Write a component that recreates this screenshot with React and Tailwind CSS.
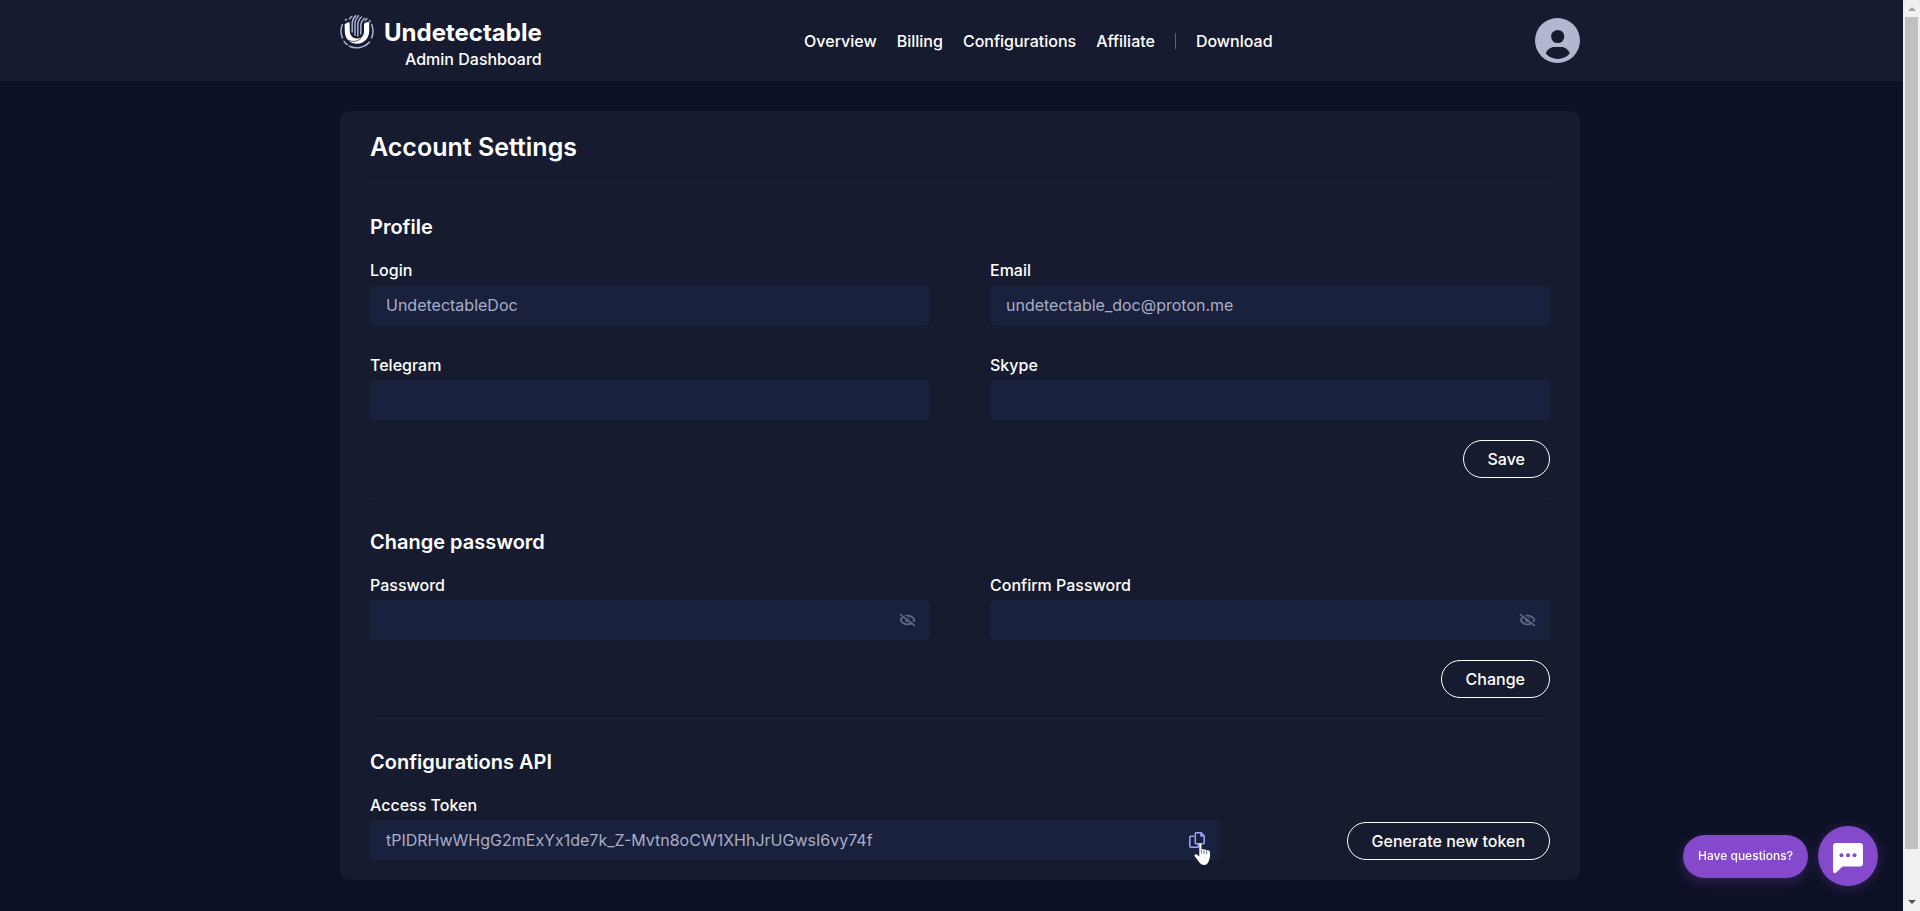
import React from "react";

function Logo() {
  return (
    <svg viewBox="0 0 34 35" className="mt-px h-[35px] w-[34px]" fill="none" strokeLinecap="round" aria-hidden="true">
      <path d="M4.600 11 C4.600 9.800 7.500 8.200 9.600 8.200 L9.800 17 C10 21.500 12.500 24.200 17 24.600 C21.500 24.600 24 21.600 24 17 L24 10 C24.600 8.600 27.500 7.600 29.200 8 L29.200 17 C29.200 24 24 29.800 17 29.800 C10.500 29.800 5.600 25.500 4.900 19 Z" fill="#fff" />
      <path d="M8.500 26.200 C12.500 28.400 18 27.600 21 24.400" stroke="#171b30" strokeWidth="0.700" />
      <g stroke="#a9b0d0" strokeWidth="1.500">
        <path d="M2.300 10.500 C0.600 15 0.600 20 2.400 24" />
        <path d="M31.700 10.500 C33.400 15 33.400 20 31.600 24" />
        <path d="M4 27.400 C5 28.800 6 29.800 7.300 30.700" />
        <path d="M9.500 32.300 C16 35.200 24.500 33.800 29.500 28" />
        <path d="M5.500 6.200 L6.300 5.300" />
        <path d="M9.600 4.900 C10 3.900 10.800 3 11.800 2.500" />
        <path d="M12.200 18 L12.200 9.500 C12.400 6.400 13.600 3.600 15.800 1.500" />
        <path d="M15 21.300 L15 10.500 C15 7 16.200 4 18.600 1.800" />
        <path d="M17.800 22 L17.800 11 C17.800 8 19 5.200 21.500 3" />
        <path d="M20.800 20 L20.800 12 C20.800 9 22 6.600 24.500 4.300" />
        <path d="M25.200 6.500 L27 4.600" />
        <path d="M29.500 6.700 L30.200 7.600" />
      </g>
    </svg>
  );
}

function Avatar() {
  return (
    <svg viewBox="0 0 45 45" className="size-[45px]" aria-hidden="true">
      <circle cx="22.500" cy="22.500" r="22.500" fill="#b0b7cf" />
      <circle cx="22.700" cy="18.500" r="6.600" fill="#171b30" />
      <path d="M10.800 35.500 C12 31.500 15.500 29 19.500 29 H26 C30 29 33.500 31.500 34.700 35.500 C31.500 39.300 27.500 40.900 22.700 40.900 C18 40.900 14 39.300 10.800 35.500 Z" fill="#171b30" />
    </svg>
  );
}

function HiddenEye() {
  return (
    <svg viewBox="0 0 17 14" className="h-[14px] w-[17px]" fill="none" aria-hidden="true">
      <path d="M1.600 7 C3 4 5.600 2.700 8.500 2.700 C11.400 2.700 14 4 15.400 7 C14 10 11.400 11.300 8.500 11.300 C5.600 11.300 3 10 1.600 7 Z" stroke="#5f6684" strokeWidth="1.800" />
      <circle cx="8.700" cy="6.800" r="2.500" fill="#5f6684" />
      <path d="M2 0 L17 12" stroke="#1a213c" strokeWidth="1.500" />
      <path d="M0.900 1.200 L15.900 12.900" stroke="#5f6684" strokeWidth="1.700" />
    </svg>
  );
}

function CopyIcon() {
  return (
    <svg viewBox="0 0 16 16" className="size-4" fill="none" stroke="#a3a6ff" strokeWidth="1.500" strokeLinejoin="round" aria-hidden="true">
      <path d="M4.800 4.300 H1.800 Q0.800 4.300 0.800 5.300 V14.200 Q0.800 15.200 1.800 15.200 H8.500 Q9.500 15.200 9.500 14.200 V12.200" />
      <path d="M7.300 0.800 H12.200 L15.200 3.800 V10.700 Q15.200 11.700 14.200 11.700 H7.300 Q6.300 11.700 6.300 10.700 V1.800 Q6.300 0.800 7.300 0.800 Z" />
      <path d="M12 1.200 V4 H14.800" />
    </svg>
  );
}

function HandPointer() {
  return (
    <svg viewBox="0 0 17 23" className="pointer-events-none absolute top-[23px] right-[9px] h-[23px] w-[17px]" aria-hidden="true">
      <path d="M5.300 1.800 C5.300 0.200 7.300 0.200 7.400 1.800 V6.600 C7.900 5.600 9.700 5.800 9.900 7 C10.500 6.200 12.200 6.500 12.400 7.700 C13.300 7 15.600 7.300 15.900 9 C16.300 12 16 15.200 14.800 18 C13.800 20.600 12.400 22 10.400 22 C7.900 22 6.400 21.200 4.900 18.800 L0.700 13.200 C0 11.800 1.500 10.600 2.900 11.500 L5.300 13.600 Z" fill="#fff" />
      <path d="M7.400 6.600 V10.500 M9.900 7.200 V11 M12.400 7.900 V11.300" stroke="#171b30" strokeWidth="0.600" />
    </svg>
  );
}

function Field({ id, label, type = "text", value = "", children }) {
  return (
    <div>
      <label htmlFor={id} className="block text-base leading-[30px] font-medium text-white">
        {label}
      </label>
      <div className="relative">
        <input
          id={id}
          type={type}
          defaultValue={value}
          className="block h-10 w-full rounded-[5px] bg-[#1a213c] px-4 text-base text-[#a9aec8] outline-none"
        />
        {children}
      </div>
    </div>
  );
}

function PasswordField({ id, label }) {
  return (
    <Field id={id} label={label} type="password">
      <button type="button" aria-label="Show password" className="absolute top-[13px] right-[14px]">
        <HiddenEye />
      </button>
    </Field>
  );
}

function PillButton({ children }) {
  return (
    <button type="button" className="h-[38px] rounded-full border border-white px-6 text-base font-medium whitespace-nowrap text-white">
      {children}
    </button>
  );
}

function Section({ title, children }) {
  return (
    <section className="border-t border-[#1d2238] pt-[31px] pb-5">
      <h2 className="mb-4 text-xl leading-6 font-semibold text-white">{title}</h2>
      {children}
    </section>
  );
}

function NavLink({ children }) {
  return (
    <a href="#" className="text-white">
      {children}
    </a>
  );
}

function Scrollbar() {
  return (
    <div aria-hidden="true" className="fixed inset-y-0 right-0 flex w-[17px] flex-col items-center bg-[#f0f0f0]">
      <div className="flex h-[17px] items-center">
        <svg viewBox="0 0 8 4" className="h-1 w-2"><path d="M0 4 L4 0 L8 4 Z" fill="#a3a3a3" /></svg>
      </div>
      <div className="w-[13px] grow bg-[#c0c0c0]" />
      <div className="flex h-[62px] items-end pb-[7px]">
        <svg viewBox="0 0 8 4" className="h-1 w-2"><path d="M0 0 L4 4 L8 0 Z" fill="#505050" /></svg>
      </div>
    </div>
  );
}

export default function App() {
  return (
    <div className="min-h-screen bg-[#0d1126] font-['Inter',sans-serif]">
      <header className="bg-[#171b30] px-6">
        <div className="mx-auto flex h-[81px] max-w-[1240px] items-center justify-between">
          <a href="#" className="flex items-start gap-[10px] text-white">
            <Logo />
            <span className="flex flex-col items-end pt-1">
              <span className="text-2xl leading-8 font-bold">Undetectable</span>
              <span className="text-base leading-5 font-medium">Admin Dashboard</span>
            </span>
          </a>
          <nav className="flex items-center gap-5 text-base font-medium">
            <NavLink>Overview</NavLink>
            <NavLink>Billing</NavLink>
            <NavLink>Configurations</NavLink>
            <NavLink>Affiliate</NavLink>
            <span className="h-4 w-px bg-[#5d6278]" />
            <NavLink>Download</NavLink>
          </nav>
          <button type="button" aria-label="Account" className="rounded-full">
            <Avatar />
          </button>
        </div>
      </header>

      <main className="px-6 py-[30px]">
        <div className="mx-auto max-w-[1240px] rounded-[10px] bg-[#171b30] px-[30px]">
          <h1 className="text-[25px] leading-[72px] font-semibold text-white">Account Settings</h1>

          <Section title="Profile">
            <div className="grid grid-cols-2 gap-x-[60px] gap-y-[25px]">
              <Field id="login" label="Login" value="UndetectableDoc" />
              <Field id="email" label="Email" value="undetectable_doc@proton.me" />
              <Field id="telegram" label="Telegram" />
              <Field id="skype" label="Skype" />
            </div>
            <div className="mt-5 flex justify-end">
              <PillButton>Save</PillButton>
            </div>
          </Section>

          <Section title="Change password">
            <div className="grid grid-cols-2 gap-x-[60px]">
              <PasswordField id="password" label="Password" />
              <PasswordField id="confirm-password" label="Confirm Password" />
            </div>
            <div className="mt-5 flex justify-end">
              <PillButton>Change</PillButton>
            </div>
          </Section>

          <Section title="Configurations API">
            <div className="flex items-end justify-between gap-6">
              <div className="w-full max-w-[850px]">
                <Field id="token" label="Access Token" value="tPIDRHwWHgG2mExYx1de7k_Z-Mvtn8oCW1XHhJrUGwsI6vy74f">
                  <button type="button" aria-label="Copy token" className="absolute top-3 right-[15px]">
                    <CopyIcon />
                  </button>
                  <HandPointer />
                </Field>
              </div>
              <PillButton>Generate new token</PillButton>
            </div>
          </Section>
        </div>
      </main>

      <div className="fixed right-[42px] bottom-[25px] flex items-center gap-[10px]">
        <button type="button" className="h-[43px] rounded-full bg-[#8549cb] px-[15px] text-xs font-medium text-white shadow-[0_4px_12px_rgba(133,73,203,0.3)]">
          Have questions?
        </button>
        <button type="button" aria-label="Open chat" className="flex size-[60px] items-center justify-center rounded-full bg-[#8549cb] shadow-[0_2px_12px_rgba(133,73,203,0.3)]">
          <svg viewBox="0 0 30 30" className="mt-1 size-[30px]" aria-hidden="true">
            <path d="M3 0 H27 Q30 0 30 3 V20.500 Q30 23.500 27 23.500 H9.500 L3.500 29.200 Q0 31.500 0 27.500 V3 Q0 0 3 0 Z" fill="#fff" />
            <circle cx="8.500" cy="12.300" r="2" fill="#8549cb" />
            <circle cx="15" cy="12.300" r="2" fill="#8549cb" />
            <circle cx="21.500" cy="12.300" r="2" fill="#8549cb" />
          </svg>
        </button>
      </div>

      <Scrollbar />
    </div>
  );
}
